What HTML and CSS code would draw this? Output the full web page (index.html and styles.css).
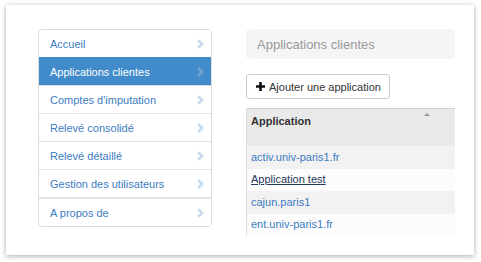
FILE: index.html
```html
<!DOCTYPE html>
<html lang="en">
<head>
  <meta charset="UTF-8" />
  <title>Applications clientes</title>
  <link rel="stylesheet" href="styles.css">
</head>
<body>
  <div class="card">

    <!-- Sidebar menu -->
    <ul class="menu">
      <li><a href="#">Accueil<svg class="chev" width="7" height="10" viewBox="0 0 7 10"><path d="M1.2 1.2L5 5L1.2 8.8"/></svg></a></li>
      <li class="active"><a href="#">Applications clientes<svg class="chev" width="7" height="10" viewBox="0 0 7 10"><path d="M1.2 1.2L5 5L1.2 8.8"/></svg></a></li>
      <li><a href="#">Comptes d'imputation<svg class="chev" width="7" height="10" viewBox="0 0 7 10"><path d="M1.2 1.2L5 5L1.2 8.8"/></svg></a></li>
      <li><a href="#">Relevé consolidé<svg class="chev" width="7" height="10" viewBox="0 0 7 10"><path d="M1.2 1.2L5 5L1.2 8.8"/></svg></a></li>
      <li><a href="#">Relevé détaillé<svg class="chev" width="7" height="10" viewBox="0 0 7 10"><path d="M1.2 1.2L5 5L1.2 8.8"/></svg></a></li>
      <li><a href="#">Gestion des utilisateurs<svg class="chev" width="7" height="10" viewBox="0 0 7 10"><path d="M1.2 1.2L5 5L1.2 8.8"/></svg></a></li>
      <li class="sep"><a href="#">A propos de<svg class="chev" width="7" height="10" viewBox="0 0 7 10"><path d="M1.2 1.2L5 5L1.2 8.8"/></svg></a></li>
    </ul>

    <!-- Main -->
    <div class="main">
      <div class="page-title">Applications clientes</div>

      <button class="btn">
        <svg class="plus" width="9" height="9" viewBox="0 0 9 9"><path d="M3.2 0h2.6v3.2H9v2.6H5.8V9H3.2V5.8H0V3.2h3.2z" fill="#111"/></svg>
        Ajouter une application
      </button>

      <table class="apps">
        <thead>
          <tr><th>Application<span class="sort"></span></th></tr>
        </thead>
        <tbody>
          <tr><td><a href="#">activ.univ-paris1.fr</a></td></tr>
          <tr><td><a href="#" class="hover">Application test</a></td></tr>
          <tr><td><a href="#">cajun.paris1</a></td></tr>
          <tr><td><a href="#">ent.univ-paris1.fr</a></td></tr>
        </tbody>
      </table>
    </div>
  </div>
</body>
</html>
```

FILE: styles.css
```css
* {
  box-sizing: border-box;
}

body {
  margin: 0;
  padding: 5px 7px 7px 6px;
  background: #fff;
  font-family: "Liberation Sans", Arial, sans-serif;
  font-size: 11px;
  color: #333;
}

.card {
  width: 468px;
  height: 250px;
  background: #fff;
  box-shadow: 0 1px 5px rgba(0,0,0,0.35);
  display: flex;
  align-items: flex-start;
  gap: 34px;
  padding: 24px 19px 0 32px;
}

/* Sidebar */
.menu {
  list-style: none;
  margin: 0;
  padding: 0;
  width: 174px;
  border: 1px solid #ddd;
  border-radius: 4px;
  overflow: hidden;
}

.menu li {
  border-top: 1px solid #e2e2e2;
}

.menu li:first-child {
  border-top: none;
}

.menu li.sep {
  border-top: 2px solid #e4e4e4;
}

.menu a {
  display: flex;
  align-items: center;
  justify-content: space-between;
  height: 27px;
  padding: 0 7px 0 11px;
  color: #3b7cc2;
  text-decoration: none;
}

.menu li.active {
  border-top-color: #428bca;
}

.menu li.active a {
  background: #428bca;
  color: #fff;
}

.menu li.active + li {
  border-top-color: #d8d8d8;
}

.chev {
  fill: none;
  stroke: #c6daee;
  stroke-width: 2.6;
  margin-top: 1px;
}

.menu li.active .chev {
  stroke: #6fa3d5;
}

/* Main column */
.main {
  width: 209px;
}

.page-title {
  height: 30px;
  background: #f5f5f5;
  border-radius: 4px;
  padding: 0 11px;
  display: flex;
  align-items: center;
  font-size: 13px;
  color: #999;
}

.btn {
  margin-top: 15px;
  height: 25px;
  padding: 0 8px 0 9px;
  border: 1px solid #ccc;
  border-radius: 3px;
  background: #fff;
  font-family: inherit;
  font-size: 11px;
  color: #333;
  display: flex;
  align-items: center;
  gap: 4px;
}

.apps {
  margin-top: 9px;
  width: 100%;
  border-collapse: collapse;
  border-left: 1px solid #ddd;
}

.apps th {
  position: relative;
  text-align: left;
  font-weight: bold;
  background: #e9e9e9;
  border-top: 1px solid #d3d3d3;
  height: 37px;
  padding: 6px 4px 17px;
  line-height: 13px;
  vertical-align: top;
}

.sort {
  position: absolute;
  top: 4px;
  left: 177px;
  border-left: 3px solid transparent;
  border-right: 3px solid transparent;
  border-bottom: 3px solid #999;
}

.apps td {
  padding: 5px 4px;
  line-height: 13px;
}

.apps tbody tr:nth-child(odd) {
  background: #f2f2f2;
}

.apps tbody tr:nth-child(even) {
  background: #fcfcfc;
}

.apps tbody tr:nth-child(even) td {
  padding: 4px 4px 5px;
}

.apps a {
  color: #3b7cc2;
  text-decoration: none;
}

.apps a.hover {
  color: #22375a;
  text-decoration: underline;
}
```
